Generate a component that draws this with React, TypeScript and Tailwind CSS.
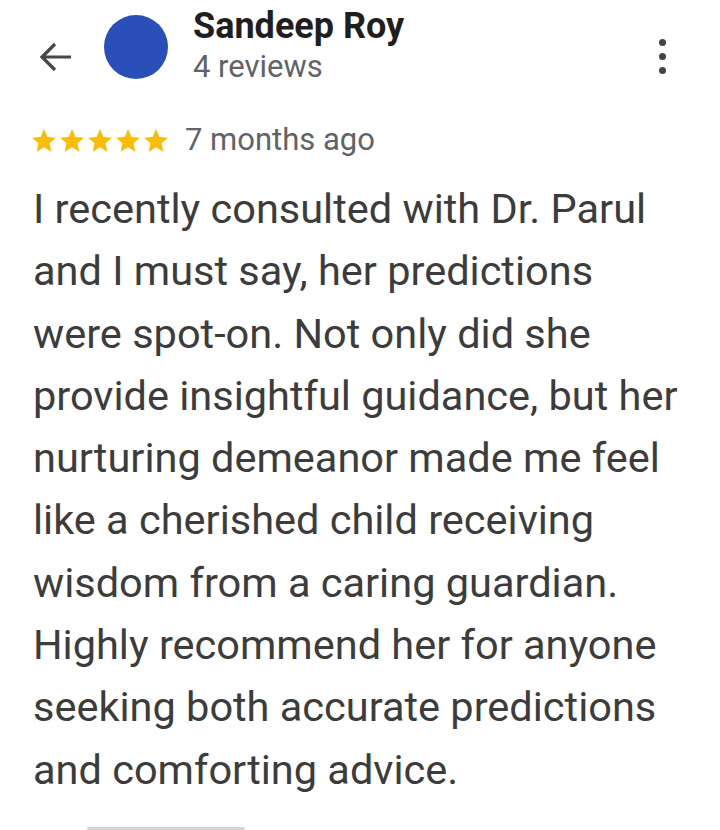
import React from "react";

const lines = [
  "I recently consulted with Dr. Parul",
  "and I must say, her predictions",
  "were spot-on. Not only did she",
  "provide insightful guidance, but her",
  "nurturing demeanor made me feel",
  "like a cherished child receiving",
  "wisdom from a caring guardian.",
  "Highly recommend her for anyone",
  "seeking both accurate predictions",
  "and comforting advice.",
];

function Star() {
  return (
    <svg viewBox="2 2 20 19.3" width="24" height="23" preserveAspectRatio="none">
      <path
        d="M12 17.27L18.18 21l-1.64-7.03L22 9.24l-7.19-.61L12 2 9.19 8.63 2 9.24l5.46 4.73L5.82 21z"
        fill="#fbbc04"
      />
    </svg>
  );
}

function App() {
  return (
    <div className="w-[720px] h-[830px] overflow-hidden bg-white font-['Roboto',sans-serif]">
      {/* header */}
      <div className="flex items-start">
        <svg className="ml-[40px] mt-[42px]" width="32" height="30" viewBox="0 0 32 30" fill="none">
          <path d="M31 15H3M15 2L2 15l13 13" stroke="#474747" strokeWidth="3.2" strokeLinecap="butt" />
        </svg>
        <div className="ml-[32px] mt-[15px] w-[64px] h-[64px] rounded-full bg-[#2a4fb8]" />
        <div className="ml-[25px] mt-[5px] flex flex-col">
          <span className="text-[36px] leading-[42px] font-bold text-[#1f1f1f]">Sandeep Roy</span>
          <span className="mt-[2px] text-[31px] leading-[36px] text-[#5f6368]">4 reviews</span>
        </div>
        <div className="ml-auto mr-[54px] mt-[39px] flex flex-col gap-[7px]">
          <span className="w-[7px] h-[7px] rounded-full bg-[#444]" />
          <span className="w-[7px] h-[7px] rounded-full bg-[#444]" />
          <span className="w-[7px] h-[7px] rounded-full bg-[#444]" />
        </div>
      </div>

      {/* rating row */}
      <div className="flex items-center pl-[32px] mt-[37px]">
        <div className="flex gap-[4px]">
          <Star />
          <Star />
          <Star />
          <Star />
          <Star />
        </div>
        <span className="ml-[17px] text-[31px] leading-[36px] text-[#5f6368]">7 months ago</span>
      </div>

      {/* review body */}
      <p className="pl-[33px] mt-[20px] text-[41.5px] leading-[62.3px] text-[#3c3c3c]">
        {lines.map((l, i) => (
          <React.Fragment key={i}>
            {l}
            {i < lines.length - 1 && <br />}
          </React.Fragment>
        ))}
      </p>

      <div className="ml-[87px] mt-[26px] w-[158px] h-[3px] rounded-full bg-[#d6d6d6]" />
    </div>
  );
}

export default App;
